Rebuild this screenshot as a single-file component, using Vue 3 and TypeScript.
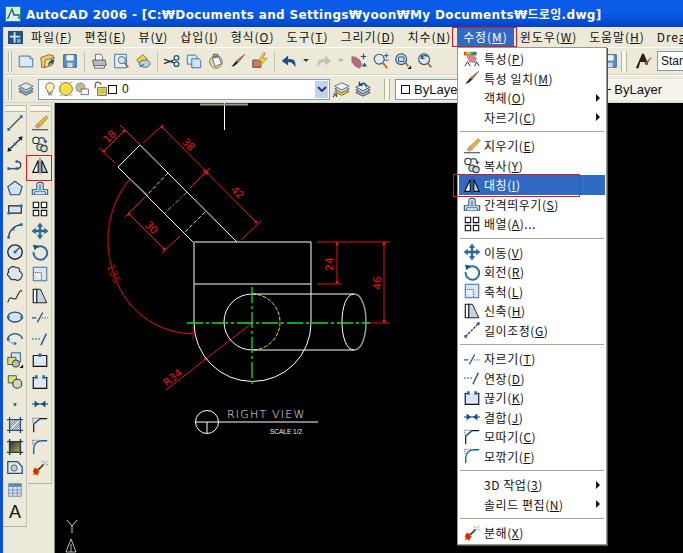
<script setup lang="ts">
interface MenuRow {
  label?: string
  hotkey?: string
  suffix?: string
  icon?: string
  arrow?: boolean
  active?: boolean
  sep?: boolean
}

const menus = [
  { label: '파일', hotkey: 'F' },
  { label: '편집', hotkey: 'E' },
  { label: '뷰', hotkey: 'V' },
  { label: '삽입', hotkey: 'I' },
  { label: '형식', hotkey: 'O' },
  { label: '도구', hotkey: 'T' },
  { label: '그리기', hotkey: 'D' },
  { label: '치수', hotkey: 'N' },
  { label: '수정', hotkey: 'M', open: true },
  { label: '윈도우', hotkey: 'W' },
  { label: '도움말', hotkey: 'H' },
]

// '|' is a separator, 'v' is the small dropdown arrow
const standardTools = [
  'new', 'open', 'save', '|', 'print', 'preview', 'publish', '|',
  'cut', 'copybuf', 'paste', 'brush', 'bolt', '|',
  'undo', 'v', 'redo', 'vg', 'pan', 'zoomplus', 'zoomwin', 'zoomprev',
]

const drawTools = [
  'line', 'xline', 'pline', 'polygon', 'rect', 'arc', 'circle', 'cloud', 'spline', 'ellipse',
  'earc', 'insert', 'block', 'point', 'hatch', 'gradient', 'region', 'table', 'text',
]

const modifyTools = [
  'erase', 'copy', 'mirror', 'offset', 'array', 'move', 'rotate', 'scale', 'stretch',
  'trim', 'extend', 'break1', 'break2', 'join', 'chamfer', 'fillet', 'explode',
]

const rows: MenuRow[] = [
  { label: '특성', hotkey: 'P', icon: 'props' },
  { label: '특성 일치', hotkey: 'M', icon: 'brush' },
  { label: '객체', hotkey: 'O', arrow: true },
  { label: '자르기', hotkey: 'C', arrow: true },
  { sep: true },
  { label: '지우기', hotkey: 'E', icon: 'erase' },
  { label: '복사', hotkey: 'Y', icon: 'copy' },
  { label: '대칭', hotkey: 'I', icon: 'mirror', active: true },
  { label: '간격띄우기', hotkey: 'S', icon: 'offset' },
  { label: '배열', hotkey: 'A', suffix: '...', icon: 'array' },
  { sep: true },
  { label: '이동', hotkey: 'V', icon: 'move' },
  { label: '회전', hotkey: 'R', icon: 'rotate' },
  { label: '축척', hotkey: 'L', icon: 'scale' },
  { label: '신축', hotkey: 'H', icon: 'stretch' },
  { label: '길이조정', hotkey: 'G', icon: 'lengthen' },
  { sep: true },
  { label: '자르기', hotkey: 'T', icon: 'trim' },
  { label: '연장', hotkey: 'D', icon: 'extend' },
  { label: '끊기', hotkey: 'K', icon: 'break2' },
  { label: '결합', hotkey: 'J', icon: 'join' },
  { label: '모따기', hotkey: 'C', icon: 'chamfer' },
  { label: '모깎기', hotkey: 'F', icon: 'fillet' },
  { sep: true },
  { label: '3D 작업', hotkey: '3', arrow: true },
  { label: '솔리드 편집', hotkey: 'N', arrow: true },
  { sep: true },
  { label: '분해', hotkey: 'X', icon: 'explode' },
]
</script>

<template>
  <div class="window">
    <!-- shared icon sheet -->
    <svg class="sheet" width="0" height="0" aria-hidden="true">
      <defs>
        <linearGradient id="grad-fill" x1="0" y1="0" x2="1" y2="1">
          <stop offset="0" stop-color="#2a2a2a" />
          <stop offset="1" stop-color="#b8b04a" />
        </linearGradient>
        <linearGradient id="rainbow" x1="0" y1="0" x2="1" y2="0">
          <stop offset="0" stop-color="#e02020" />
          <stop offset=".33" stop-color="#e0e020" />
          <stop offset=".66" stop-color="#20b040" />
          <stop offset="1" stop-color="#3050e0" />
        </linearGradient>

        <symbol id="i-new" viewBox="0 0 20 20"><path d="M2.5 4.5h12l3 3v9h-15z" fill="#dceaf6" stroke="#2f6d9e" /><path d="M14.5 4.5v3h3" fill="#fff" stroke="#2f6d9e" /></symbol>
        <symbol id="i-open" viewBox="0 0 20 20"><path d="M2 6l9-3 5 1v9l-9 4H3z" fill="#e8c872" stroke="#8a6d2a" /><path d="M7 9l10-3-3 9-8 2z" fill="#f3dc9a" stroke="#8a6d2a" /><path d="M11 15c0-4 2-5 5-5M16 10l-2-1v3z" fill="none" stroke="#1c5180" stroke-width="1.6" /></symbol>
        <symbol id="i-save" viewBox="0 0 20 20"><path d="M3 3h14v14H3z" fill="#5e8fc0" stroke="#2c5c8c" /><path d="M6 3.5h8v6H6z" fill="#eef4fa" /><path d="M7 12h6v5H7z" fill="#c9d9ea" /></symbol>
        <symbol id="i-print" viewBox="0 0 20 20"><path d="M6 2.5h6l2 3v4H6z" fill="#f4f4f4" stroke="#667" /><path d="M3 9h14l1 6H4z" fill="#b9b9c4" stroke="#556" /><path d="M5 15h11v3H5z" fill="#e8e8ee" stroke="#667" /></symbol>
        <symbol id="i-preview" viewBox="0 0 20 20"><path d="M3 2.5h13v15H3z" fill="#e6eff8" stroke="#2f6d9e" /><circle cx="11" cy="9" r="4" fill="#cfe2f3" stroke="#566" /><path d="M14 12l4 5" stroke="#a56a2a" stroke-width="2" /></symbol>
        <symbol id="i-publish" viewBox="0 0 20 20"><path d="M3 9l7-6 5 5-7 7z" fill="#e9d24a" stroke="#7e6d1f" /><ellipse cx="12" cy="13" rx="6" ry="4" fill="#b9cfe4" stroke="#45688c" /><path d="M6 16l5-2" stroke="#1c5180" /></symbol>
        <symbol id="i-cut" viewBox="0 0 20 20"><path d="M1 8l11 4M1 13l11-4" stroke="#334" stroke-width="1.4" /><circle cx="15" cy="6.5" r="2.6" fill="#fff" stroke="#1c5180" stroke-width="1.4" /><circle cx="15" cy="13.5" r="2.6" fill="#fff" stroke="#1c5180" stroke-width="1.4" /></symbol>
        <symbol id="i-copybuf" viewBox="0 0 20 20"><path d="M2.5 3.5h9l2 2v8h-11z" fill="#dceaf6" stroke="#2f6d9e" /><path d="M7.5 7.5h8l2 2v8h-10z" fill="#cfe2f3" stroke="#2f6d9e" /></symbol>
        <symbol id="i-paste" viewBox="0 0 20 20"><ellipse cx="10" cy="11" rx="7" ry="7" fill="#e8d79a" stroke="#8a7430" /><path d="M6 7l7-2 3 8-7 3z" fill="#f2f7fc" stroke="#45688c" /><path d="M7 2.5h5v3H7z" fill="#aaa" stroke="#555" /></symbol>
        <symbol id="i-brush" viewBox="0 0 20 20"><path d="M17.5 2.5L8 10l2 2z" fill="#c07a4a" stroke="#5a3a20" stroke-width=".6" /><path d="M8 10l2 2-4 3.5-3.5 1z" fill="#222" /></symbol>
        <symbol id="i-bolt" viewBox="0 0 20 20"><path d="M2 9h9v8H2z" fill="#e8734a" stroke="#1c5180" /><path d="M14 1l-6 9h4l-3 7 9-10h-5l3-6z" fill="#f5d63c" stroke="#8a7420" stroke-width=".7" /></symbol>
        <symbol id="i-undo" viewBox="0 0 20 20"><path d="M17 17c1-6-1-10-8-9V4L2 10l7 5v-4c4 0 6 2 8 6z" fill="#1c5180" /></symbol>
        <symbol id="i-redo" viewBox="0 0 20 20"><path d="M3 17c-1-6 1-10 8-9V4l7 6-7 5v-4c-4 0-6 2-8 6z" fill="#c4c2b4" /></symbol>
        <symbol id="i-pan" viewBox="0 0 20 20"><path d="M2 5l5 1 4 3 2 5-2 4-5-2-4-5z" fill="#b86a76" stroke="#8a4a56" stroke-width=".5" /><path d="M13 16l3-4 3 4z" fill="#1c5180" /><path d="M15 2v6M12 5h6" stroke="#1c5180" stroke-width="1.3" /></symbol>
        <symbol id="i-zoomplus" viewBox="0 0 20 20"><circle cx="8" cy="8" r="5.5" fill="#dfeaf4" stroke="#44586c" stroke-width="1.3" /><path d="M12 12l5 6" stroke="#b0762e" stroke-width="2.2" /><path d="M16 1.5v5M13.5 4h5M13.5 9h5" stroke="#1c5180" /></symbol>
        <symbol id="i-zoomwin" viewBox="0 0 20 20"><circle cx="8" cy="8" r="6" fill="#cbdcec" stroke="#44586c" stroke-width="1.3" /><path d="M5 5.5h6v5H5z" fill="none" stroke="#1c5180" /><path d="M13 12l3 4" stroke="#b0762e" stroke-width="2" /><path d="M19 15v4h-4z" fill="#111" /></symbol>
        <symbol id="i-zoomprev" viewBox="0 0 20 20"><circle cx="9" cy="8" r="6" fill="#dfeaf4" stroke="#44586c" stroke-width="1.3" /><path d="M13 12l4 5" stroke="#b0762e" stroke-width="2.2" /><path d="M13 5c-3-2-6-1-7 2M6 3.5V7h3.5" fill="none" stroke="#1c5180" stroke-width="1.4" /></symbol>
        <symbol id="i-layers" viewBox="0 0 20 20"><path d="M10 9l8 4-8 4-8-4z" fill="#8aa" stroke="#567" /><path d="M10 6l8 4-8 4-8-4z" fill="#b9cad8" stroke="#567" /><path d="M10 3l8 4-8 4-8-4z" fill="#dce6ee" stroke="#567" /></symbol>
        <symbol id="i-layers2" viewBox="0 0 20 20"><path d="M11 9l8 4-8 4-8-4z" fill="#e8c92a" stroke="#776a1a" /><path d="M11 6l8 4-8 4-8-4z" fill="#d6e2ea" stroke="#567" /><path d="M11 3l8 4-8 4-8-4z" fill="#eef3f6" stroke="#567" /><path d="M1 19l4-4M1.5 15.5H5V19" fill="none" stroke="#1c5180" stroke-width="1.2" /></symbol>
        <symbol id="i-layers3" viewBox="0 0 20 20"><path d="M10 10l8 4-8 4-8-4z" fill="#9fb3c4" stroke="#456" /><path d="M10 7l8 4-8 4-8-4z" fill="#c5d4e0" stroke="#456" /><path d="M10 4l8 4-8 4-8-4z" fill="#e4ecf2" stroke="#456" /><path d="M14 8c0-4-4-6-7-3M6 2v4h4" fill="none" stroke="#1c5180" stroke-width="1.6" /></symbol>
        <symbol id="i-bulb" viewBox="0 0 20 20"><path d="M10 2a5.5 5.5 0 0 1 3 10v2H7v-2a5.5 5.5 0 0 1 3-10z" fill="#fff6a8" stroke="#555" /><path d="M7.5 15h5v3h-5z" fill="#999" /></symbol>
        <symbol id="i-sun" viewBox="0 0 20 20"><circle cx="10" cy="10" r="8" fill="#f8df3c" stroke="#445a80" stroke-width="1" /><path d="M2 2h3M15 2h3M2 18h3M15 18h3" stroke="#a8a23a" /></symbol>
        <symbol id="i-freeze" viewBox="0 0 20 20"><circle cx="8" cy="8" r="5.5" fill="#cdb97a" stroke="#6c8cb0" stroke-width="1.6" stroke-dasharray="2 1" /><path d="M9 10h9v7H9z" fill="#fff" stroke="#555" /></symbol>
        <symbol id="i-lock" viewBox="0 0 20 20"><path d="M4 9V5a3.5 3.5 0 0 1 7 0" fill="none" stroke="#666" stroke-width="1.6" /><path d="M7 8h11v10H7z" fill="#ecdc48" stroke="#555" /><path d="M9 11h7M9 14h7" stroke="#a89a22" /></symbol>
        <symbol id="i-brushA" viewBox="0 0 20 20"><path d="M2 18L9 2h2l5 12h-3l-1-3H7l-2 7z" fill="#222" /><path d="M19 6l-7 7 1.500 1.500z" fill="#b87a3a" stroke="#6a431c" stroke-width=".6" /></symbol>

        <symbol id="i-line" viewBox="0 0 20 20"><path d="M3 17L17 3" stroke="#2a2a2a" stroke-width="1.200" /><path d="M1.500 15.500h3v3h-3zM15.500 1.500h3v3h-3z" fill="#1f6fc4" /></symbol>
        <symbol id="i-xline" viewBox="0 0 20 20"><path d="M3 17L17 3" stroke="#2a2a2a" stroke-width="1.400" /><path d="M18.500 1.500l-1 5-4-4zM1.500 18.500l1-5 4 4z" fill="#222" /><path d="M8.500 8.500h3v3h-3z" fill="#1f6fc4" /></symbol>
        <symbol id="i-pline" viewBox="0 0 20 20"><path d="M3 13h9c6 0 6-8 0-8" fill="none" stroke="#222" stroke-width="1.200" /><path d="M1.500 11.500h3v3h-3zM10.500 11.500h3v3h-3zM10.500 3.500h3v3h-3z" fill="#1f6fc4" /></symbol>
        <symbol id="i-polygon" viewBox="0 0 20 20"><path d="M10 2.500l8 6-3 9H5l-3-9z" fill="#d3e2f0" stroke="#24507c" stroke-width="1.300" /></symbol>
        <symbol id="i-rect" viewBox="0 0 20 20"><path d="M3 6.500h14v8H3z" fill="#d6e4f2" stroke="#222" stroke-width="1.300" /><path d="M15.500 5h3v3h-3zM1.500 13h3v3h-3z" fill="#1f6fc4" /></symbol>
        <symbol id="i-arc" viewBox="0 0 20 20"><path d="M3 17C3 10 9 4 17 3" fill="none" stroke="#333" stroke-width="1.300" /><path d="M1.500 15.500h3v3h-3zM15.500 1.500h3v3h-3zM6.500 6.500h3v3h-3z" fill="#1f6fc4" /></symbol>
        <symbol id="i-circle" viewBox="0 0 20 20"><circle cx="10" cy="10" r="8" fill="#d8e6f2" stroke="#222" stroke-width="1.500" /><path d="M10 10l5-5" stroke="#1c5180" stroke-width="1.300" /><path d="M8.500 8.500h3v3h-3z" fill="#1f6fc4" /></symbol>
        <symbol id="i-cloud" viewBox="0 0 20 20"><path d="M5 3c2-2 5-1 6 0 3-1 5 2 4 4 3 1 4 5 2 7-1 3-5 4-7 2-3 1-6 0-6-3-3-1-3-4-1-5-1-2 0-4 2-5z" fill="#dbe7f2" stroke="#333" stroke-width="1.300" /></symbol>
        <symbol id="i-spline" viewBox="0 0 20 20"><path d="M2 17C5 6 9 18 12 11S16 4 18 4" fill="none" stroke="#333" stroke-width="1.300" /></symbol>
        <symbol id="i-ellipse" viewBox="0 0 20 20"><ellipse cx="10" cy="10" rx="8" ry="5.500" fill="#d3e2f0" stroke="#1c4f80" stroke-width="1.500" /><path d="M1 9h3v3H1zM16 9h3v3h-3z" fill="#1f6fc4" /></symbol>
        <symbol id="i-earc" viewBox="0 0 20 20"><path d="M2 10c0-3 4-6 8-6s8 3 8 6" fill="none" stroke="#1c4f80" stroke-width="1.500" /><path d="M2 10c1 3 4 5 8 5" fill="#dce8f3" stroke="#1c4f80" stroke-dasharray="1.500 1.500" /><path d="M1 9h3v3H1zM8.500 13.500h3v3h-3z" fill="#1f6fc4" /></symbol>
        <symbol id="i-insert" viewBox="0 0 20 20"><path d="M6 2h10v10H6z" fill="#d8e6f2" stroke="#1c5180" /><path d="M2 7h9v8H2z" fill="#eadf5a" stroke="#1c5180" /><circle cx="11" cy="14" r="4" fill="#b8c4a0" stroke="#333" /><path d="M19 15v4h-4z" fill="#111" /></symbol>
        <symbol id="i-block" viewBox="0 0 20 20"><path d="M2.500 3h9v8h-9z" fill="#eadf5a" stroke="#1c5180" /><circle cx="12.500" cy="12" r="5" fill="#cfdbc0" stroke="#333" stroke-width="1.200" /></symbol>
        <symbol id="i-point" viewBox="0 0 20 20"><path d="M8.500 9h3v3h-3z" fill="#1f5f9e" /></symbol>
        <symbol id="i-hatch" viewBox="0 0 20 20"><path d="M4 4h12v12H4z" fill="#dfe8f0" /><path d="M4 9l5-5M4 14l10-10M6 16L16 6M11 16l5-5M4 11.500l7.500-7.500M8.500 16L16 8.500" stroke="#445" stroke-width=".8" /><path d="M1 4h18M1 16h18M4 1v18M16 1v18" stroke="#1c4f80" stroke-width="1.400" /></symbol>
        <symbol id="i-gradient" viewBox="0 0 20 20"><path d="M4 4h12v12H4z" fill="url(#grad-fill)" /><path d="M1 4h18M1 16h18M4 1v18M16 1v18" stroke="#1c3f60" stroke-width="1.600" /></symbol>
        <symbol id="i-region" viewBox="0 0 20 20"><path d="M2 3h11l5 6v7H2z" fill="#dfeaf4" stroke="#1c5180" stroke-width="1.400" /><circle cx="9" cy="10" r="3.500" fill="#c8ccc8" stroke="#555" /></symbol>
        <symbol id="i-table" viewBox="0 0 20 20"><path d="M3 3h14v14H3z" fill="#dbe6f2" stroke="#6d8fb4" /><path d="M3 3h14v3.500H3z" fill="#5f86b4" /><path d="M3 10h14M3 13.500h14M7.500 6.500V17M12.500 6.500V17" stroke="#6d8fb4" /></symbol>
        <symbol id="i-text" viewBox="0 0 20 20"><text x="10" y="18" text-anchor="middle" font-family="Liberation Sans, sans-serif" font-size="20" fill="#111">A</text></symbol>

        <symbol id="i-erase" viewBox="0 0 20 20"><path d="M17 2l2 2-9 10-3-3z" fill="#e8b93a" stroke="#8a6d20" stroke-width=".7" /><path d="M7 11l3 3-3 2-2.500-2z" fill="#e89a9a" stroke="#8a5050" stroke-width=".5" /><path d="M1 17.500h18" stroke="#222" /></symbol>
        <symbol id="i-copy" viewBox="0 0 20 20"><circle cx="5.500" cy="6" r="3.500" fill="#fff" stroke="#222" stroke-width="1.200" /><circle cx="10" cy="13.500" r="3.500" fill="#cfd8e0" stroke="#333" stroke-width="1.200" /><circle cx="14.500" cy="15" r="3.500" fill="#cfd8e0" stroke="#333" stroke-width="1.200" /><path d="M9 4c3-2 6-1 7 3" fill="none" stroke="#1c5180" stroke-width="1.500" /><path d="M13.500 6.500h5l-2.500 3z" fill="#1c5180" /></symbol>
        <symbol id="i-mirror" viewBox="0 0 20 20"><path d="M8 4v13H2z" fill="#fff" stroke="#111" stroke-width="1.300" /><path d="M12 4v13h6z" fill="#c3d3e2" stroke="#111" stroke-width="1.300" /><path d="M10 1v18" stroke="#1c5180" /></symbol>
        <symbol id="i-offset" viewBox="0 0 20 20"><path d="M1.500 17v-5h5V6c0-3 7-3 7 0v6h5v5z" fill="#fff" stroke="#1c4f80" stroke-width="1.200" /><path d="M4 17v-3h5V7c0-1 2-1 2 0v7h5v3" fill="#cfe0f0" stroke="#1c4f80" stroke-width=".8" /></symbol>
        <symbol id="i-array" viewBox="0 0 20 20"><path d="M2.500 2.500h6v6h-6zM11.500 2.500h6v6h-6zM2.500 11.500h6v6h-6zM11.500 11.500h6v6h-6z" fill="#fff" stroke="#111" stroke-width="1.200" /></symbol>
        <symbol id="i-move" viewBox="0 0 20 20"><path d="M10 1l3 4h-2v4h4V7l4 3-4 3v-2h-4v4h2l-3 4-3-4h2v-4H5v2l-4-3 4-3v2h4V5H7z" fill="#2a6fa8" stroke="#16466f" stroke-width=".5" /></symbol>
        <symbol id="i-rotate" viewBox="0 0 20 20"><path d="M6 5a7.500 7.500 0 1 1-3 5" fill="none" stroke="#2a6fa8" stroke-width="2.200" /><path d="M2 2l7 1-5 5z" fill="#1c5180" /></symbol>
        <symbol id="i-scale" viewBox="0 0 20 20"><path d="M2.500 2.500h15v15h-15z" fill="#dbe7f2" stroke="#2a5f90" /><path d="M2.500 8.500h9v9" fill="#f3f6f9" stroke="#222" stroke-dasharray="1 1" /></symbol>
        <symbol id="i-stretch" viewBox="0 0 20 20"><path d="M2.500 2.500h4v15h-4z" fill="#fff" stroke="#111" stroke-width="1.200" /><path d="M6.500 2.500h4l7 15h-11z" fill="#c3d6e8" stroke="#111" /></symbol>
        <symbol id="i-trim" viewBox="0 0 20 20"><path d="M1 11h5" stroke="#1c4f80" stroke-width="1.300" /><path d="M7 16L13 5" stroke="#1c4f80" stroke-width="1.300" /><path d="M12 11h7" stroke="#1c4f80" stroke-dasharray="1.500 1.500" /></symbol>
        <symbol id="i-extend" viewBox="0 0 20 20"><path d="M1 10h9" stroke="#1c4f80" stroke-width="1.300" stroke-dasharray="2 1.500" /><path d="M11 17L17 4" stroke="#1c4f80" stroke-width="1.500" /></symbol>
        <symbol id="i-break1" viewBox="0 0 20 20"><path d="M2.500 5h15v12h-15z" fill="#dbe7f2" stroke="#111" stroke-width="1.300" /><path d="M8.500 2.500h3v4h-3z" fill="#2a6fa8" /></symbol>
        <symbol id="i-break2" viewBox="0 0 20 20"><path d="M6 5H2.500v12h15V5H14" fill="#dbe7f2" stroke="#111" stroke-width="1.300" /><path d="M4.500 2.500h3v4h-3zM12.500 2.500h3v4h-3z" fill="#2a6fa8" /></symbol>
        <symbol id="i-join" viewBox="0 0 20 20"><path d="M1 10h18" stroke="#1c4f80" stroke-width="1.300" /><path d="M4 6l5 4-5 4zM16 6l-5 4 5 4z" fill="#1c4f80" /></symbol>
        <symbol id="i-chamfer" viewBox="0 0 20 20"><path d="M3 18V9L10 3h8" fill="none" stroke="#111" stroke-width="1.300" /><path d="M3 9L10 3" stroke="#1f6fc4" stroke-width="1.500" /><path d="M2 2.500h7M2 2.500v6" stroke="#445" stroke-dasharray="1 1" /></symbol>
        <symbol id="i-fillet" viewBox="0 0 20 20"><path d="M3 18v-6c0-5 4-9 9-9h6" fill="none" stroke="#1c5f9e" stroke-width="1.500" /><path d="M2 2.500h7M2 2.500v6" stroke="#445" stroke-dasharray="1 1" /></symbol>
        <symbol id="i-explode" viewBox="0 0 20 20"><path d="M3 11l2-2 1 2 3-1-1 3 2 1-2 2-1 3-2-2-3 1 1-3-1-1z" fill="#d9201a" stroke="#f4d020" stroke-width=".8" /><path d="M8 12l6-6" stroke="#444" stroke-width="2" /><path d="M14 3l1 2M18 2l-2 3M19 6l-3 1M12 2l1 2" stroke="#8a9ab0" /></symbol>
        <symbol id="i-props" viewBox="0 0 20 20"><path d="M1 2h14v4H1z" fill="url(#rainbow)" /><path d="M4 5l7 1 4 3-2 5-6-1z" fill="#d88c8c" stroke="#8a4a4a" stroke-width=".5" /><path d="M2 18l3-5 3 5M13 18l2-5 3 5" fill="none" stroke="#222" /></symbol>
        <symbol id="i-lengthen" viewBox="0 0 20 20"><path d="M3 17L17 3" stroke="#222" stroke-width="1.300" stroke-dasharray="3 1" /><path d="M1.500 15.500h3v3h-3zM15.500 1.500h3v3h-3z" fill="#1f5f9e" /></symbol>
      </defs>
    </svg>

    <div class="titlebar">
      <svg class="app-logo" viewBox="0 0 16 16">
        <path d="M0 0h16v16H0z" fill="#1f8a80" />
        <path d="M1 1h14v14H1z" fill="#d8ece8" />
        <path d="M2.500 13L7 3l2 6h5v4" fill="none" stroke="#126a60" stroke-width="1.300" />
      </svg>
      <span class="title">AutoCAD 2006 - [C:₩Documents and Settings₩yoon₩My Documents₩드로잉.dwg]</span>
    </div>

    <div class="frame">
      <nav class="menubar">
        <svg class="doc-logo" viewBox="0 0 16 16">
          <path d="M0 1h16v14H0z" fill="#24507c" />
          <path d="M6 2.500h2v11H6zM2 6h11v2H2z" fill="#cfe6f5" />
          <path d="M9.500 9.500h4v4h-4z" fill="#6fb2dc" />
        </svg>
        <span v-for="m in menus" :key="m.label" class="menu-item" :class="{ open: m.open }">{{ m.label }}(<u>{{ m.hotkey }}</u>)</span>
        <span class="menu-item">Dre<u>a</u>m</span>
      </nav>

      <div class="toolrow">
        <span class="grip"></span>
        <template v-for="(t, i) in standardTools" :key="i">
          <span v-if="t === '|'" class="tool-sep"></span>
          <span v-else-if="t === 'v' || t === 'vg'" class="drop" :class="{ off: t === 'vg' }"></span>
          <span v-else class="tool"><svg class="ico"><use :href="'#i-' + t" /></svg></span>
        </template>
        <span class="row-end">
          <span class="tool"><svg class="ico"><use href="#i-save" /></svg></span>
          <span class="grip wide"></span>
          <span class="tool"><svg class="ico"><use href="#i-brushA" /></svg></span>
          <span class="style-box">Standard</span>
        </span>
      </div>

      <div class="toolrow second">
        <span class="grip"></span>
        <span class="tool"><svg class="ico"><use href="#i-layers" /></svg></span>
        <div class="layer-combo">
          <svg class="state"><use href="#i-bulb" /></svg>
          <svg class="state"><use href="#i-sun" /></svg>
          <svg class="state"><use href="#i-freeze" /></svg>
          <svg class="state lock"><use href="#i-lock" /></svg>
          <span class="swatch"></span>
          <span class="layer-name">0</span>
          <span class="combo-btn"><svg viewBox="0 0 10 6" width="10" height="6"><path d="M1 1l4 4 4-4" fill="none" stroke="#24406c" stroke-width="2" /></svg></span>
        </div>
        <span class="tool"><svg class="ico"><use href="#i-layers2" /></svg></span>
        <span class="tool"><svg class="ico"><use href="#i-layers3" /></svg></span>
        <span class="tool-sep end"></span>
        <span class="grip wide"></span>
        <div class="bylayer-box"><span class="swatch"></span>ByLayer</div>
        <div class="linetype-box"><span class="sample"></span>ByLayer</div>
      </div>

      <div class="workspace">
        <aside class="dock">
          <div class="dock-bar">
            <span class="dock-grip"></span>
            <span v-for="t in drawTools" :key="t" class="dock-tool"><svg class="ico"><use :href="'#i-' + t" /></svg></span>
          </div>
          <div class="dock-bar">
            <span class="dock-grip"></span>
            <span v-for="t in modifyTools" :key="t" class="dock-tool"><svg class="ico"><use :href="'#i-' + t" /></svg></span>
          </div>
        </aside>

        <main class="canvas">
          <svg class="drawing" viewBox="55 103 628 450" fill="none">
            <!-- crosshair stub -->
            <path d="M224.500 103v27" stroke="#fff" />
            <path d="M200 104.500h48" stroke="#999" stroke-width="2" />

            <!-- dimensions -->
            <g stroke="#f01010">
              <path d="M124 131L104 151M120 125l20 20M99 148l16 15" />
              <path d="M162 127L256 222M163 125l-20 18M210 168l-20 20M261 221l-20 19" />
              <path d="M129 214l35 35M145 197l-20 20M180 236l-18 17" />
              <path d="M317 242h73M317 284h25M337 242v42M384 242v81M370 323h20" />
              <path d="M252 323L166 390" />
            </g>
            <g fill="#f01010">
              <circle cx="124" cy="131" r="1.500" /><circle cx="104" cy="151" r="1.500" />
              <circle cx="162" cy="127" r="1.500" /><circle cx="205" cy="171" r="1.500" />
              <circle cx="207" cy="173" r="1.500" /><circle cx="256" cy="222" r="1.500" />
              <circle cx="129" cy="214" r="1.500" /><circle cx="164" cy="249" r="1.500" />
              <circle cx="337" cy="244" r="1.500" /><circle cx="337" cy="282" r="1.500" />
              <circle cx="384" cy="244" r="1.500" /><circle cx="384" cy="321" r="1.500" />
              <circle cx="205" cy="359" r="1.500" />
            </g>
            <path d="M130 179C108 205 100 245 118 285" stroke="#b00808" stroke-width="1.300" />
            <path d="M118 285C132 315 160 333 193 334" stroke="#f01010" />
            <path d="M193 326v14" stroke="#b00808" />

            <g class="dim-text">
              <text transform="translate(110 137) rotate(-45)">18</text>
              <text transform="translate(188 145) rotate(45)">38</text>
              <text transform="translate(237 193) rotate(45)">42</text>
              <text transform="translate(151 228) rotate(45)">30</text>
              <text class="dark" transform="translate(113 274) rotate(68)">135</text>
              <text transform="translate(330 264) rotate(-90)">24</text>
              <text transform="translate(378 283) rotate(-90)">46</text>
              <text transform="translate(173 378) rotate(-38)">R34</text>
            </g>

            <!-- angled part -->
            <path d="M118 167l22-22" stroke="#fff" />
            <path d="M140 145l97 97" stroke="#fff" />
            <path d="M140 145l20 20M195 200l20 20" stroke="#888" stroke-width="1.500" />
            <path d="M118 167l75 75" stroke="#fff" />
            <path d="M130 179l18 17" stroke="#888" stroke-width="1.500" />
            <path d="M187 192l-22 21" stroke="#22dd22" stroke-dasharray="5 2 2 2" />
            <path d="M168 173l-21 22M205 212l-21 21" stroke="#e8e820" stroke-dasharray="4 2" />

            <!-- front part -->
            <path d="M194 242h117v81M194 284h117" stroke="#fff" />
            <path d="M194 242v81" stroke="#aaa" stroke-width="1.500" />
            <path d="M194 323a58.500 58.500 0 0 0 117 0" stroke="#fff" />
            <path d="M252 294a28 28 0 0 0 0 56" stroke="#fff" />
            <path d="M252 294a28 28 0 0 1 0 56" stroke="#e8e820" stroke-dasharray="4 1.500" />
            <path d="M252 294h102M252 350h102" stroke="#fff" />
            <path d="M354 294c-16 0-16 56 0 56" stroke="#fff" />
            <path d="M354 294c16 0 16 56 0 56" stroke="#999" stroke-width="1.500" />
            <path d="M187 323h183M252 287v99" stroke="#18e018" stroke-width="1.300" stroke-dasharray="16 3 3 3" />

            <!-- view label -->
            <circle cx="207" cy="422" r="11.500" stroke="#fff" />
            <path d="M195 422h123M207 422v11" stroke="#fff" />
            <text class="view-title" x="227" y="418">RIGHT VIEW</text>
            <text class="view-scale" x="270" y="434">SCALE 1/2</text>

            <!-- ucs icon -->
            <path d="M67 520l5 6 5-6M72 526v7" stroke="#ccc" />
            <path d="M71 539l-5 13h10zM71 544v8" stroke="#bbb" />
          </svg>
        </main>
      </div>
    </div>

    <!-- open 수정 menu -->
    <div class="dropdown">
      <template v-for="(r, i) in rows" :key="i">
        <div v-if="r.sep" class="dd-sep"></div>
        <div v-else class="dd-row" :class="{ active: r.active }">
          <span class="dd-icon"><svg v-if="r.icon" class="ico"><use :href="'#i-' + r.icon" /></svg></span>
          <span class="dd-label">{{ r.label }}(<u>{{ r.hotkey }}</u>){{ r.suffix }}</span>
          <span v-if="r.arrow" class="dd-arrow"></span>
        </div>
      </template>
    </div>

    <!-- red callouts -->
    <span class="callout on-menu"></span>
    <span class="callout on-item"></span>
    <span class="callout on-tool"></span>
  </div>
</template>

<style scoped>
.window {
  position: relative;
  width: 683px;
  height: 553px;
  overflow: hidden;
  background: #0a50d8;
  font-family: "Noto Sans CJK KR", "Liberation Sans", sans-serif;
  font-size: 12px;
  color: #111;
}

.sheet {
  position: absolute;
}

.titlebar {
  height: 27px;
  display: flex;
  align-items: center;
  padding-left: 5px;
  gap: 5px;
  background: linear-gradient(#0a5ae6 0, #0a5ce8 40%, #0450da 75%, #0344c4 100%);
}

.app-logo {
  width: 16px;
  height: 16px;
  flex: none;
}

.title {
  font-family: "DejaVu Sans", "Noto Sans CJK KR", sans-serif;
  font-weight: 700;
  font-size: 12px;
  letter-spacing: 0.33px;
  color: #fff;
  white-space: nowrap;
}

.frame {
  margin-left: 3px;
  height: 526px;
  display: flex;
  flex-direction: column;
  background: #ece9d8;
}

.menubar {
  height: 20px;
  flex: none;
  display: flex;
  align-items: center;
  white-space: nowrap;
  padding-left: 5px;
}

.doc-logo {
  width: 15px;
  height: 15px;
  margin-right: 2px;
  flex: none;
}

.menu-item {
  padding: 0 6px;
  line-height: 18px;
  letter-spacing: 0.93px;
}

.menu-item.open {
  background: #316ac5;
  color: #fff;
}

.toolrow {
  height: 28px;
  flex: none;
  display: flex;
  align-items: center;
  padding-left: 5px;
  border-top: 1px solid #fff;
  border-bottom: 1px solid #d8d4c0;
  box-sizing: border-box;
  overflow: hidden;
}

.grip {
  width: 4px;
  height: 21px;
  flex: none;
  margin-right: 3px;
  border-left: 1px solid #b8b5a2;
  border-right: 1px solid #b8b5a2;
  background: #f8f6ea;
  box-sizing: border-box;
}

.grip.wide {
  width: 6px;
  margin-right: 5px;
}

.tool {
  width: 22px;
  height: 22px;
  flex: none;
  display: flex;
  align-items: center;
  justify-content: center;
}

.ico {
  width: 18px;
  height: 18px;
  display: block;
}

.tool-sep {
  width: 7px;
  height: 21px;
  flex: none;
  background: linear-gradient(#c5c2b0, #c5c2b0) center / 1px 100% no-repeat;
}

.tool-sep.end {
  width: 9px;
  margin-right: 1px;
  background: none;
}

.drop {
  width: 13px;
  height: 22px;
  flex: none;
  position: relative;
}

.drop::after {
  content: "";
  position: absolute;
  left: 3px;
  top: 9px;
  border: 3px solid transparent;
  border-top: 3px solid #1c3f70;
}

.drop.off::after {
  border-top-color: #b4b2a4;
}

.row-end {
  margin-left: auto;
  display: flex;
  align-items: center;
  width: 84px;
  flex: none;
  white-space: nowrap;
}

.style-box {
  width: 40px;
  flex: none;
  height: 20px;
  line-height: 18px;
  margin-left: 3px;
  padding-left: 3px;
  background: #fff;
  border: 1px solid #7f9db9;
  box-sizing: border-box;
  font-family: "Liberation Sans", sans-serif;
  overflow: hidden;
}

.layer-combo {
  width: 292px;
  height: 21px;
  margin-left: 1px;
  flex: none;
  display: flex;
  align-items: center;
  padding-left: 3px;
  box-sizing: border-box;
  background: #fff;
  border: 1px solid #7f9db9;
}

.state {
  width: 16px;
  height: 16px;
  flex: none;
}

.state.lock {
  margin-left: 2px;
}

.swatch {
  width: 9px;
  height: 9px;
  flex: none;
  border: 1px solid #111;
  background: #fff;
  box-sizing: border-box;
}

.layer-name {
  margin-left: 5px;
  font-family: "Liberation Sans", sans-serif;
}

.combo-btn {
  margin-left: auto;
  width: 15px;
  height: 19px;
  display: flex;
  align-items: center;
  justify-content: center;
  background: #c1d2ee;
  border: 1px solid #fff;
  box-sizing: border-box;
}

.bylayer-box {
  width: 130px;
  height: 21px;
  flex: none;
  display: flex;
  align-items: center;
  gap: 4px;
  padding-left: 5px;
  box-sizing: border-box;
  background: #fff;
  border: 1px solid #7f9db9;
  font-family: "Liberation Sans", sans-serif;
  font-size: 13px;
  overflow: hidden;
}

.linetype-box {
  flex: 1;
  height: 21px;
  margin-left: 3px;
  display: flex;
  align-items: center;
  justify-content: flex-end;
  padding-right: 21px;
  gap: 3px;
  font-family: "Liberation Sans", sans-serif;
  font-size: 13px;
  background: #f6f4ea;
}

.sample {
  width: 5px;
  border-top: 1px solid #222;
}

.workspace {
  flex: 1;
  min-height: 0;
  display: flex;
}

.dock {
  width: 52px;
  flex: none;
  display: flex;
  gap: 1px;
  align-items: flex-start;
  border-right: 1px solid #8a8878;
  box-sizing: border-box;
}

.dock-bar {
  width: 24px;
  display: flex;
  flex-direction: column;
  align-items: center;
  padding: 2px 0 4px;
  box-sizing: border-box;
  border-right: 1px solid #c9c6b4;
  border-bottom: 1px solid #b4b1a0;
}

.dock-grip {
  width: 20px;
  height: 7px;
  flex: none;
  box-sizing: border-box;
  border-top: 1px solid #b8b5a2;
  border-bottom: 1px solid #b8b5a2;
  background: #f8f6ea;
}

.dock-tool {
  width: 22px;
  height: 21.6px;
  flex: none;
  display: flex;
  align-items: center;
  justify-content: center;
}

.canvas {
  flex: 1;
  background: #000;
  overflow: hidden;
}

.drawing {
  display: block;
  width: 628px;
  height: 450px;
}

.dim-text text {
  font-family: "DejaVu Sans", sans-serif;
  font-size: 10.5px;
  fill: #f01010;
  text-anchor: middle;
  dominant-baseline: middle;
}

.dim-text text.dark {
  fill: #b00808;
}

.view-title {
  font-family: "DejaVu Sans", sans-serif;
  font-size: 11px;
  letter-spacing: 1.2px;
  font-weight: 200;
  fill: #e8e8e8;
}

.view-scale {
  font-family: "Liberation Sans", sans-serif;
  font-size: 6.5px;
  fill: #eee;
}

.dropdown {
  position: absolute;
  left: 457px;
  top: 47px;
  width: 150px;
  height: 498px;
  padding: 1px;
  box-sizing: border-box;
  background: #fff;
  border: 1px solid #9a9888;
  box-shadow: 1px 1px 0 #555;
  letter-spacing: 0.55px;
}

.dd-row {
  height: 19.5px;
  display: flex;
  align-items: center;
  white-space: nowrap;
}

.dd-row.active {
  background: #316ac5;
  color: #fff;
}

.dd-icon {
  width: 25px;
  flex: none;
  display: flex;
  justify-content: center;
}

.dd-arrow {
  margin-left: auto;
  margin-right: 5px;
  border: 4px solid transparent;
  border-left: 4px solid #111;
  border-right: 0;
}

.dd-sep {
  height: 9px;
  background: linear-gradient(#aca899, #aca899) center / 100% 1px no-repeat;
  margin: 0 1px;
}

.callout {
  position: absolute;
  border: 1px solid #e8141c;
  box-sizing: border-box;
}

.on-menu {
  left: 452px;
  top: 27px;
  width: 65px;
  height: 20px;
}

.on-item {
  left: 453px;
  top: 174px;
  width: 127px;
  height: 23px;
}

.on-tool {
  left: 26px;
  top: 155px;
  width: 26px;
  height: 26px;
}
</style>
